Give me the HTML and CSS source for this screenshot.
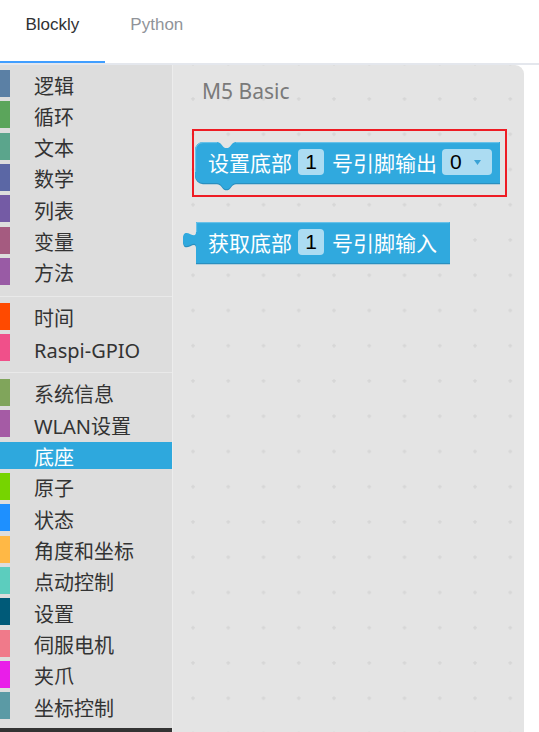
FILE: index.html
```html
<!DOCTYPE html>
<html lang="zh">
<head>
<meta charset="utf-8">
<title>Blockly</title>
<link rel="stylesheet" href="styles.css">
</head>
<body>
<div class="app">
  <header class="tabs">
    <div class="tab active">Blockly</div>
    <div class="tab">Python</div>
  </header>
  <main class="main">
    <aside class="toolbox">
      <div class="cats">
        <div class="row" style="--c:#5b80a5"><span class="bar"></span><span class="label">逻辑</span></div>
        <div class="row" style="--c:#5ba55b"><span class="bar"></span><span class="label">循环</span></div>
        <div class="row" style="--c:#5ba58c"><span class="bar"></span><span class="label">文本</span></div>
        <div class="row" style="--c:#5b67a5"><span class="bar"></span><span class="label">数学</span></div>
        <div class="row" style="--c:#745ba5"><span class="bar"></span><span class="label">列表</span></div>
        <div class="row" style="--c:#a55b80"><span class="bar"></span><span class="label">变量</span></div>
        <div class="row" style="--c:#995ba5"><span class="bar"></span><span class="label">方法</span></div>
        <div class="sep"></div>
        <div class="row" style="--c:#ff4a00"><span class="bar"></span><span class="label">时间</span></div>
        <div class="row" style="--c:#f0508a"><span class="bar"></span><span class="label">Raspi-GPIO</span></div>
        <div class="sep"></div>
        <div class="row" style="--c:#80a55b"><span class="bar"></span><span class="label">系统信息</span></div>
        <div class="row" style="--c:#a55ba5"><span class="bar"></span><span class="label">WLAN设置</span></div>
        <div class="row selected" style="--c:#2ea8dd"><span class="bar"></span><span class="label">底座</span></div>
        <div class="row" style="--c:#76d400"><span class="bar"></span><span class="label">原子</span></div>
        <div class="row" style="--c:#1e90ff"><span class="bar"></span><span class="label">状态</span></div>
        <div class="row" style="--c:#ffb845"><span class="bar"></span><span class="label">角度和坐标</span></div>
        <div class="row" style="--c:#5ccdbe"><span class="bar"></span><span class="label">点动控制</span></div>
        <div class="row" style="--c:#005a78"><span class="bar"></span><span class="label">设置</span></div>
        <div class="row" style="--c:#f07a8a"><span class="bar"></span><span class="label">伺服电机</span></div>
        <div class="row" style="--c:#e91ee9"><span class="bar"></span><span class="label">夹爪</span></div>
        <div class="row" style="--c:#5b9aa5"><span class="bar"></span><span class="label">坐标控制</span></div>
      </div>
      <div class="toolbox-foot"></div>
    </aside>
    <section class="flyout">
      <svg class="grid" width="351" height="680" aria-hidden="true">
        <defs>
          <pattern id="dots" patternUnits="userSpaceOnUse" x="2.4" y="16.4" width="35.25" height="35.25">
            <path d="M15.6 17.6 H19.6 M17.6 15.6 V19.6" stroke="#d5d5d5" stroke-width="1.2"/>
          </pattern>
        </defs>
        <rect width="351" height="680" fill="url(#dots)"/>
      </svg>
      <div class="flyout-title">M5 Basic</div>

      <div class="block stmt">
        <svg class="shape" width="305" height="41" aria-hidden="true">
          <path class="shade" transform="translate(0,1.2)" d="M0,8 A8,8 0 0 1 8,0 H22 c2,0 3,1 4,2 l2,2.5 c1,1 2,1.5 3.5,1.5 s2.5,-0.5 3.5,-1.5 l2,-2.5 c1,-1 2,-2 4,-2 H305 V41 H41 c-2,0 -3,1 -4,2 l-2,2.5 c-1,1 -2,1.5 -3.5,1.5 s-2.5,-0.5 -3.5,-1.5 l-2,-2.5 c-1,-1 -2,-2 -4,-2 H8 A8,8 0 0 1 0,33 Z"/>
          <path class="body" d="M0,8 A8,8 0 0 1 8,0 H22 c2,0 3,1 4,2 l2,2.5 c1,1 2,1.5 3.5,1.5 s2.5,-0.5 3.5,-1.5 l2,-2.5 c1,-1 2,-2 4,-2 H305 V41 H41 c-2,0 -3,1 -4,2 l-2,2.5 c-1,1 -2,1.5 -3.5,1.5 s-2.5,-0.5 -3.5,-1.5 l-2,-2.5 c-1,-1 -2,-2 -4,-2 H8 A8,8 0 0 1 0,33 Z"/>
          <path class="light" d="M0.6,30 V8 A7.4,7.4 0 0 1 8,0.6 H22 M41,0.6 H304"/>
        </svg>
        <span class="btext">设置底部</span>
        <span class="field">1</span>
        <span class="btext gap">号引脚输出</span>
        <span class="dropdown">0<svg class="arrow" width="7" height="5" viewBox="0 0 7 5"><path d="M0,0 H7 L3.5,5 Z"/></svg></span>
      </div>

      <div class="block value">
        <svg class="shape" width="254" height="41" aria-hidden="true">
          <path class="shade" transform="translate(0,1.2)" d="M0,0 H254 V41 H0 V25 c0,-10 -13,8 -13,-7.5 s13,2.5 13,-7.5 Z"/>
          <path class="body" d="M0,0 H254 V41 H0 V25 c0,-10 -13,8 -13,-7.5 s13,2.5 13,-7.5 Z"/>
          <path class="light" d="M0.6,10 V0.6 H253.4"/>
        </svg>
        <span class="btext">获取底部</span>
        <span class="field">1</span>
        <span class="btext gap">号引脚输入</span>
      </div>

      <div class="highlight"></div>
    </section>
    <div class="rest"></div>
  </main>
</div>
</body>
</html>
```

FILE: styles.css
```css
* { box-sizing: border-box; }

html, body {
  margin: 0;
  padding: 0;
  background: #ffffff;
}

.app {
  width: 539px;
  height: 732px;
  overflow: hidden;
  display: flex;
  flex-direction: column;
}

/* ---------- tabs ---------- */
.tabs {
  display: flex;
  height: 65px;
  border-bottom: 2px solid #e4e7ed;
  flex: none;
}

.tab {
  height: 63px;
  padding: 15px 25.5px 0;
  font-family: "Liberation Sans", Arial, sans-serif;
  font-size: 17px;
  line-height: 20px;
  color: #909399;
  border-bottom: 2px solid transparent;
}

.tab.active {
  color: #303133;
  border-bottom-color: #409eff;
}

/* ---------- main ---------- */
.main {
  flex: 1;
  display: flex;
  min-height: 0;
}

.toolbox {
  width: 173px;
  flex: none;
  background: #dddddd;
  border-right: 1px solid #ececec;
  display: flex;
  flex-direction: column;
}

.cats {
  flex: 1;
  padding-top: 5px;
}

.row {
  height: 27px;
  margin-bottom: 4.33px;
  display: flex;
  align-items: flex-start;
  font-family: "Noto Sans", "Noto Sans CJK SC", sans-serif;
  font-size: 20px;
  color: #333333;
}

.bar {
  width: 10px;
  height: 27px;
  flex: none;
  background: var(--c);
}

.label {
  margin-left: 24px;
  padding-top: 2.5px;
  line-height: 27px;
  white-space: nowrap;
}

.row.selected {
  background: #2ea8dd;
  color: #ffffff;
}

.sep {
  height: 1px;
  background: #e9e9e9;
  margin: 11.33px 0 5.5px;
}

.toolbox-foot {
  height: 4px;
  background: #333333;
  flex: none;
}

/* ---------- flyout ---------- */
.flyout {
  position: relative;
  width: 351px;
  flex: none;
  background: #e4e4e4;
  border-top-right-radius: 9px;
  padding-top: 16.4px;
  display: flex;
  flex-direction: column;
  align-items: flex-start;
}

.grid {
  position: absolute;
  left: 0;
  top: 0;
}

.flyout-title {
  position: relative;
  margin-left: 29px;
  font-family: "Noto Sans", "Open Sans", sans-serif;
  font-size: 21px;
  line-height: 21px;
  color: #7a7a7a;
}

.block {
  position: relative;
  isolation: isolate;
  height: 41px;
  display: flex;
  align-items: center;
  font-family: "Noto Sans CJK SC", "Noto Sans", sans-serif;
  font-size: 21px;
  color: #ffffff;
  white-space: nowrap;
}

.block .shape {
  position: absolute;
  left: 0;
  top: 0;
  overflow: visible;
  z-index: -1;
}

.shape .body { fill: #30a9de; }
.shape .shade { fill: #2a8fbf; }
.shape .light { fill: none; stroke: #6ec4ea; stroke-width: 1; }

.stmt {
  width: 305px;
  margin-left: 22px;
  margin-top: 39.6px;
  padding-left: 13px;
}

.value {
  width: 254px;
  margin-left: 23px;
  margin-top: 39px;
  padding-left: 12px;
}

.btext {
  line-height: 26px;
}

.field {
  width: 26px;
  height: 26px;
  margin-left: 6px;
  border-radius: 4px;
  background: #acdcf2;
  color: #000000;
  font-family: "Liberation Sans", Arial, sans-serif;
  font-size: 21px;
  display: flex;
  align-items: center;
  justify-content: center;
}

.gap {
  margin-left: 8px;
}

.dropdown {
  width: 50px;
  height: 26px;
  margin-left: 5px;
  border-radius: 4px;
  background: #acdcf2;
  color: #000000;
  font-family: "Liberation Sans", Arial, sans-serif;
  font-size: 21px;
  display: flex;
  align-items: center;
  padding-left: 8px;
}

.arrow {
  margin-left: 12px;
  fill: #3aa3d6;
}

.highlight {
  position: absolute;
  left: 19px;
  top: 64px;
  width: 315px;
  height: 68px;
  border: 2px solid #ee1c24;
}

.rest {
  flex: 1;
  background: #ffffff;
}
```
